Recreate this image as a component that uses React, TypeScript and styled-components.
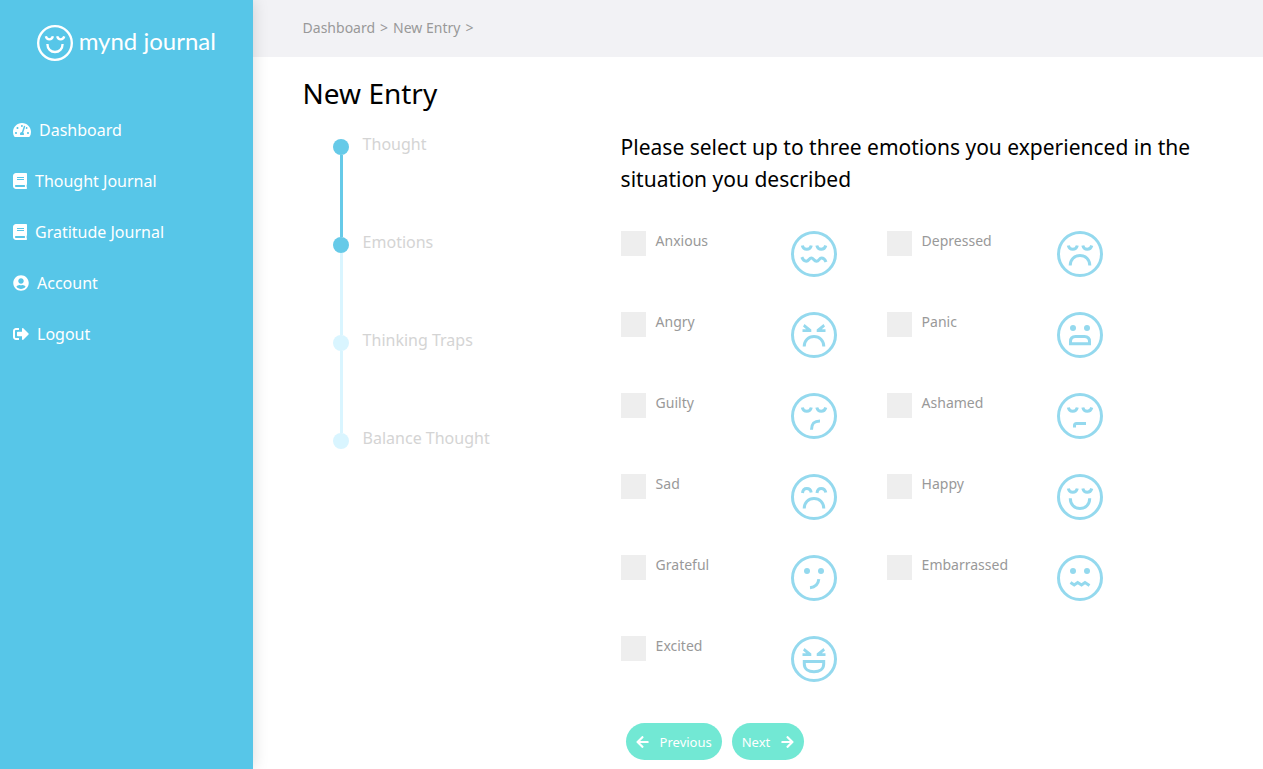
import React from "react";
import styled, { createGlobalStyle } from "styled-components";
import {
  FaArrowLeft,
  FaArrowRight,
  FaBook,
  FaSignOutAlt,
  FaTachometerAlt,
  FaUserCircle,
} from "react-icons/fa";

const GlobalStyle = createGlobalStyle`
  *, *::before, *::after { box-sizing: border-box; }
  body {
    margin: 0;
    background: #fff;
    color: #000;
    font-family: "Noto Sans", "Open Sans", sans-serif;
    font-size: 16px;
  }
`;

const Page = styled.div`
  display: grid;
  grid-template-columns: 20% 1fr;
  min-height: 100vh;
`;

const Sidebar = styled.aside`
  z-index: 1;
  background: #57c6e8;
  color: #fff;
  box-shadow: 0 0 15px rgba(0, 0, 0, 0.15);
`;

const Logo = styled.a`
  display: flex;
  align-items: center;
  justify-content: center;
  gap: 6px;
  height: 36px;
  margin: 25px 0 43px;
  color: #fff;
  font-family: Lato, sans-serif;
  font-size: 24px;
  line-height: 36px;
  text-decoration: none;
  white-space: nowrap;
`;

const LogoText = styled.span`
  padding-bottom: 4px;
`;

const NavList = styled.ul`
  margin: 0;
  padding: 0;
  list-style: none;
`;

const NavLink = styled.a`
  display: flex;
  align-items: center;
  gap: 8px;
  height: 51px;
  padding-left: 13px;
  color: #fff;
  font-size: 16px;
  text-decoration: none;
`;

const NavIcon = styled.span<{ $width: number }>`
  display: flex;
  width: ${(p) => p.$width}px;

  svg {
    width: 100%;
    height: 16px;
  }
`;

const Content = styled.div`
  min-width: 0;
`;

const Breadcrumb = styled.nav`
  display: flex;
  align-items: center;
  gap: 5px;
  height: 57px;
  padding: 0 50px 2px;
  background: #f2f2f5;
  color: #999;
  font-size: 14px;

  a {
    color: inherit;
    text-decoration: none;
  }
`;

const Main = styled.main`
  padding: 17px 50px 9px;
`;

const Title = styled.h1`
  margin: 0;
  font-size: 28px;
  font-weight: 400;
  line-height: 38px;
`;

const Columns = styled.div`
  display: grid;
  grid-template-columns: 318px 1fr;
  padding-top: 19px;
`;

const Steps = styled.ol`
  margin: 0;
  padding: 8px 0 0 30px;
  list-style: none;
`;

const Step = styled.li`
  display: flex;
  gap: 14px;
  height: 98px;
`;

const Track = styled.span`
  display: flex;
  flex-direction: column;
  width: 16px;
`;

const Dot = styled.span<{ $done: boolean }>`
  width: 16px;
  height: 16px;
  border-radius: 50%;
  background: ${(p) => (p.$done ? "#66cae8" : "#d9f5ff")};
`;

const Line = styled.span<{ $done: boolean }>`
  flex: 1;
  width: 3px;
  margin-left: 7px;
  background: ${(p) => (p.$done ? "#66cae8" : "#d9f5ff")};
`;

const StepLabel = styled.span`
  color: #d4d4d4;
  font-size: 16px;
  line-height: 10px;
`;

const Question = styled.h2`
  margin: 0 0 36px;
  font-size: 21px;
  font-weight: 400;
  line-height: 32px;
`;

const Emotions = styled.div`
  display: grid;
  grid-template-columns: 266px 266px;
  row-gap: 35px;
`;

const Emotion = styled.label`
  display: grid;
  grid-template-columns: 25px 125px 46px;
  column-gap: 10px;
  color: #999;
  font-size: 14px;
  line-height: 20px;
`;

const Checkbox = styled.input`
  appearance: none;
  width: 25px;
  height: 25px;
  margin: 0;
  background: #eee;
  cursor: pointer;

  &:checked {
    background: #57c6e8;
  }
`;

const FaceSvg = styled.svg<{ $size: number }>`
  display: block;
  flex: none;
  width: ${(p) => p.$size}px;
  height: ${(p) => p.$size}px;
  fill: none;
  stroke: currentColor;
  stroke-width: 3;
`;

const FaceSlot = styled.span`
  color: #94d9ee;
`;

const Actions = styled.div`
  display: flex;
  gap: 10px;
  padding: 41px 5px 0;
`;

const PillButton = styled.button`
  display: flex;
  align-items: center;
  gap: 11px;
  height: 37px;
  padding: 0 10px;
  border: 0;
  border-radius: 19px;
  background: #72e8d4;
  color: #fff;
  font-family: inherit;
  font-size: 13px;
  cursor: pointer;

  svg {
    height: 14px;
  }
`;

const eyes = {
  closed: <path d="M11.3 14.5Q12.2 18.3 15.8 18.3T20.3 14.5M25.8 14.5Q26.7 18.3 30.2 18.3T34.8 14.5" />,
  arched: <path d="M11.5 19Q12 14.5 15.8 14.5T20.2 18.5M26 19Q26.5 14.5 30.2 14.5T34.8 18.5" />,
  dots: (
    <g fill="currentColor" stroke="none">
      <circle cx="16" cy="16" r="3" />
      <circle cx="30" cy="16" r="3" />
    </g>
  ),
  squeezed: (
    <g fill="currentColor" stroke="none">
      <path d="M13.5 12L20.3 17.6V20H11.5V17.2H15.2L12 14.4Z" />
      <path d="M32.5 12L25.7 17.6V20H34.5V17.2H30.8L34 14.4Z" />
    </g>
  ),
};

const mouths = {
  wave: <path d="M10.8 26.2Q12.5 30.2 15.2 30.2C18 30.2 18 27 20.3 27S22.8 30.2 25.5 30.2 28 27 30.5 27Q33.5 27 35 31" />,
  frown: <path d="M13.2 34.5C13.2 28.5 17.5 24.5 23 24.5S32.8 28.5 32.8 34.5" />,
  smile: <path d="M13.3 24.2C13.3 30.5 17.5 34.5 23 34.5S32.7 30.5 32.7 24.2" />,
  slant: <path d="M20.5 36.8C20.5 30.5 23 28 29 28" />,
  flat: <path d="M17.5 34.5V32.5Q17.5 30.5 19.5 30.5H29" />,
  grimace: <path d="M13.5 31.7V29.5Q13.5 24.5 18.5 24.5H27.5Q32.5 24.5 32.5 29.5V31.7Z" />,
  smirk: <path d="M27.8 24.2Q27 32 19 32.7" />,
  wobble: <path d="M13.5 27.5L17.2 30 20.7 27.5 24.5 30 28 27.5 32.5 30.5" />,
  laugh: <path d="M13.3 25.5H32.7V28C32.7 33 28.5 35.7 23 35.7S13.3 33 13.3 28Z" />,
};

type Eyes = keyof typeof eyes;
type Mouth = keyof typeof mouths;

function Face({ eye, mouth, size = 46 }: { eye: Eyes; mouth: Mouth; size?: number }) {
  return (
    <FaceSvg $size={size} viewBox="0 0 46 46" aria-hidden="true">
      <circle cx="23" cy="23" r="21.5" />
      {eyes[eye]}
      {mouths[mouth]}
    </FaceSvg>
  );
}

const navItems = [
  { label: "Dashboard", Icon: FaTachometerAlt, width: 18 },
  { label: "Thought Journal", Icon: FaBook, width: 14 },
  { label: "Gratitude Journal", Icon: FaBook, width: 14 },
  { label: "Account", Icon: FaUserCircle, width: 16 },
  { label: "Logout", Icon: FaSignOutAlt, width: 16 },
];

const steps = [
  { label: "Thought", done: true, lineDone: true },
  { label: "Emotions", done: true, lineDone: false },
  { label: "Thinking Traps", done: false, lineDone: false },
  { label: "Balance Thought", done: false, lineDone: false },
];

const emotions: { name: string; eye: Eyes; mouth: Mouth }[] = [
  { name: "Anxious", eye: "closed", mouth: "wave" },
  { name: "Depressed", eye: "closed", mouth: "frown" },
  { name: "Angry", eye: "squeezed", mouth: "frown" },
  { name: "Panic", eye: "dots", mouth: "grimace" },
  { name: "Guilty", eye: "closed", mouth: "slant" },
  { name: "Ashamed", eye: "closed", mouth: "flat" },
  { name: "Sad", eye: "arched", mouth: "frown" },
  { name: "Happy", eye: "closed", mouth: "smile" },
  { name: "Grateful", eye: "dots", mouth: "smirk" },
  { name: "Embarrassed", eye: "dots", mouth: "wobble" },
  { name: "Excited", eye: "squeezed", mouth: "laugh" },
];

export default function App() {
  return (
    <Page>
      <GlobalStyle />
      <Sidebar>
        <Logo href="#">
          <Face eye="closed" mouth="smile" size={36} />
          <LogoText>mynd journal</LogoText>
        </Logo>
        <nav aria-label="Main">
          <NavList>
            {navItems.map(({ label, Icon, width }) => (
              <li key={label}>
                <NavLink href="#">
                  <NavIcon $width={width}>
                    <Icon aria-hidden="true" />
                  </NavIcon>
                  {label}
                </NavLink>
              </li>
            ))}
          </NavList>
        </nav>
      </Sidebar>
      <Content>
        <Breadcrumb aria-label="Breadcrumb">
          <a href="#">Dashboard</a>
          <span>&gt;</span>
          <a href="#">New Entry</a>
          <span>&gt;</span>
        </Breadcrumb>
        <Main>
          <Title>New Entry</Title>
          <Columns>
            <Steps>
              {steps.map((step, i) => (
                <Step key={step.label}>
                  <Track>
                    <Dot $done={step.done} />
                    {i < steps.length - 1 && <Line $done={step.lineDone} />}
                  </Track>
                  <StepLabel>{step.label}</StepLabel>
                </Step>
              ))}
            </Steps>
            <form onSubmit={(e) => e.preventDefault()}>
              <Question>
                Please select up to three emotions you experienced in the situation you described
              </Question>
              <Emotions>
                {emotions.map(({ name, eye, mouth }) => (
                  <Emotion key={name}>
                    <Checkbox type="checkbox" name="emotion" value={name} />
                    <span>{name}</span>
                    <FaceSlot>
                      <Face eye={eye} mouth={mouth} />
                    </FaceSlot>
                  </Emotion>
                ))}
              </Emotions>
              <Actions>
                <PillButton type="button">
                  <FaArrowLeft aria-hidden="true" />
                  Previous
                </PillButton>
                <PillButton type="submit">
                  Next
                  <FaArrowRight aria-hidden="true" />
                </PillButton>
              </Actions>
            </form>
          </Columns>
        </Main>
      </Content>
    </Page>
  );
}
